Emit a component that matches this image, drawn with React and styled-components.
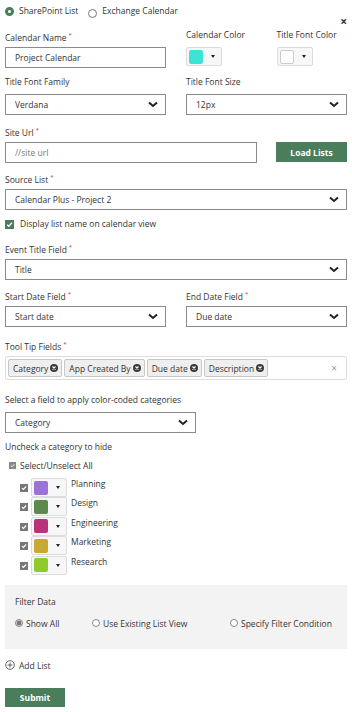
import React from 'react'
import styled, { createGlobalStyle } from 'styled-components'

const GREEN = '#4a7d5c'

const Global = createGlobalStyle`
  body {
    margin: 0;
    background: #fff;
    font-family: "Open Sans", "Noto Sans", sans-serif;
    font-size: 8.5px;
    line-height: 13px;
    color: #333;
  }
`

const Page = styled.div`
  position: relative;
  padding: 3px 5px 4px 5px;
  width: 342px;
`

const CloseX = styled.div`
  position: absolute;
  right: 5px;
  top: 15px;
  font-size: 12px;
  font-weight: bold;
  color: #333;
`

const SourceRow = styled.div`
  display: flex;
  gap: 10px;
  align-items: center;
  height: 15px;
`

const TopRadio = styled.label`
  display: flex;
  align-items: center;
  gap: 5px;
  span.dot {
    width: 9px;
    height: 9px;
    border-radius: 50%;
    box-sizing: border-box;
    border: ${p => (p.$on ? `3px solid ${GREEN}` : '1px solid #777')};
    background: #fff;
    margin-top: ${p => (p.$on ? '2px' : '6px')};
  }
`

const Grid = styled.div`
  display: grid;
  grid-template-columns: ${p => p.$cols || '1fr 1fr'};
  column-gap: ${p => p.$gap || '20px'};
  margin-top: ${p => p.$mt || '0'};
`

const Field = styled.div`
  display: flex;
  flex-direction: column;
`

const Label = styled.div`
  height: 14px;
  line-height: 14px;
  margin-bottom: 5px;
  white-space: nowrap;
  sup {
    color: #c33;
    font-size: 6px;
    margin-left: 2px;
  }
`

const Input = styled.div`
  box-sizing: border-box;
  height: 21px;
  border: 1px solid #8a8a8a;
  display: flex;
  align-items: center;
  padding: 0 9px;
  color: ${p => (p.$placeholder ? '#777' : '#333')};
`

const SelectBox = styled(Input)`
  justify-content: space-between;
  padding-right: 7px;
  width: ${p => p.$w || 'auto'};
`

const Chevron = () => (
  <svg width="10" height="7" viewBox="0 0 10 7">
    <polyline points="1,1.5 5,5 9,1.5" fill="none" stroke="#222" strokeWidth="2" />
  </svg>
)

const Select = ({ value, w }) => (
  <SelectBox $w={w}>
    <span>{value}</span>
    <Chevron />
  </SelectBox>
)

const Picker = styled.div`
  box-sizing: border-box;
  width: 36px;
  height: 19px;
  border: 1px solid #dcdcdc;
  border-radius: 2px;
  background: #f7f7f7;
  display: flex;
  align-items: center;
  padding: 0 4px 0 2px;
  gap: 8px;
  flex-shrink: 0;
  i {
    width: 14px;
    height: 14px;
    border-radius: 2px;
    box-sizing: border-box;
    background: ${p => p.$color};
    border: ${p => (p.$color === '#fff' ? '1px solid #ccc' : 'none')};
  }
  b {
    width: 0;
    height: 0;
    border-left: 2.5px solid transparent;
    border-right: 2.5px solid transparent;
    border-top: 3px solid #222;
  }
`

const ColorPicker = ({ color }) => (
  <Picker $color={color}>
    <i />
    <b />
  </Picker>
)

const Row = styled.div`
  margin-top: ${p => p.$mt || '0'};
`

const GreenButton = styled.div`
  background: ${GREEN};
  color: #fff;
  font-weight: bold;
  height: ${p => p.$h || '19px'};
  display: flex;
  align-items: center;
  justify-content: center;
  width: ${p => p.$w || 'auto'};
`

const CheckRow = styled.div`
  display: flex;
  align-items: center;
  gap: ${p => p.$gap || '6px'};
  margin-top: ${p => p.$mt || '0'};
  padding-left: ${p => p.$indent || '0'};
  .text {
    margin-top: ${p => p.$lift || '0'};
  }
`

const Box = styled.span`
  width: ${p => p.$size || 8}px;
  height: ${p => p.$size || 8}px;
  background: ${p => p.$bg || '#777'};
  display: inline-flex;
  align-items: center;
  justify-content: center;
  flex-shrink: 0;
`

const Check = ({ size = 8, bg }) => (
  <Box $size={size} $bg={bg}>
    <svg width={size - 2} height={size - 2} viewBox="0 0 8 8">
      <polyline points="1.3,4.2 3.2,6 6.8,2" fill="none" stroke="#fff" strokeWidth="1.5" />
    </svg>
  </Box>
)

const TagBox = styled.div`
  box-sizing: border-box;
  height: 24px;
  border: 1px solid #ddd;
  border-radius: 2px;
  display: flex;
  align-items: center;
  padding: 0 2px;
  gap: 2px;
  .clear {
    margin-left: auto;
    margin-right: 7px;
    color: #999;
    font-size: 10px;
  }
`

const Tag = styled.span`
  box-sizing: border-box;
  height: 18px;
  border: 1px solid #c8c8c8;
  border-radius: 2px;
  background: #efefef;
  display: inline-flex;
  align-items: center;
  gap: 2px;
  padding: 0 3px 0 4px;
`

const XCircle = () => (
  <svg width="8" height="8" viewBox="0 0 8 8">
    <circle cx="4" cy="4" r="4" fill="#3a3a3a" />
    <path d="M2.5 2.5 L5.5 5.5 M5.5 2.5 L2.5 5.5" stroke="#fff" strokeWidth="1.2" />
  </svg>
)

const CatList = styled.div`
  margin-top: 6px;
`

const CatRow = styled.div`
  display: flex;
  align-items: flex-start;
  height: 19.4px;
  padding-left: 15px;
  gap: 3px;
  > span:first-child {
    margin-top: 6px;
  }
  .name {
    margin-left: 1px;
    margin-top: -1px;
  }
`

const FilterPanel = styled.div`
  background: #f3f3f3;
  margin-top: 10px;
  height: 64px;
  box-sizing: border-box;
  padding: 10px 10px;
`

const FilterOptions = styled.div`
  display: grid;
  grid-template-columns: 77px 138px 1fr;
  margin-top: 9px;
`

const SmallRadio = styled.label`
  display: flex;
  align-items: center;
  gap: 3px;
  &::before {
    content: '';
    width: 8px;
    height: 8px;
    box-sizing: border-box;
    border-radius: 50%;
    border: 1px solid #888;
    background: ${p => (p.$on ? 'radial-gradient(circle, #777 0 2px, #ccc 2.5px)' : '#fff')};
  }
`

const AddList = styled.div`
  display: flex;
  align-items: center;
  gap: 4px;
  margin-top: 10px;
`

const Req = () => <sup>*</sup>

const categories = [
  ['Planning', '#9b72d6'],
  ['Design', '#5a8a4e'],
  ['Engineering', '#b8337a'],
  ['Marketing', '#c9a836'],
  ['Research', '#8dcc2c'],
]

export default function App() {
  return (
    <>
      <Global />
      <Page>
        <CloseX>×</CloseX>
        <SourceRow>
          <TopRadio $on><span className="dot" />SharePoint List</TopRadio>
          <TopRadio><span className="dot" />Exchange Calendar</TopRadio>
        </SourceRow>

        <Grid $mt="10px">
          <Field>
            <Label>Calendar Name<Req /></Label>
            <Input>Project Calendar</Input>
          </Field>
          <Grid>
            <Field>
              <Label>Calendar Color</Label>
              <ColorPicker color="#3de3d4" />
            </Field>
            <Field>
              <Label>Title Font Color</Label>
              <ColorPicker color="#fff" />
            </Field>
          </Grid>
        </Grid>

        <Grid $mt="7px">
          <Field>
            <Label>Title Font Family</Label>
            <Select value="Verdana" />
          </Field>
          <Field>
            <Label>Title Font Size</Label>
            <Select value="12px" />
          </Field>
        </Grid>

        <Row $mt="8px">
          <Label>Site Url<Req /></Label>
          <Grid $cols="252px 1fr" $gap="19px">
            <Input $placeholder>//site url</Input>
            <GreenButton $h="20px">Load Lists</GreenButton>
          </Grid>
        </Row>

        <Row $mt="7px">
          <Label>Source List<Req /></Label>
          <Select value="Calendar Plus - Project 2" />
        </Row>

        <CheckRow $mt="9.5px" $lift="-3px">
          <Check size={9} bg={GREEN} />
          <span className="text">Display list name on calendar view</span>
        </CheckRow>

        <Row $mt="10.5px">
          <Label>Event Title Field<Req /></Label>
          <Select value="Title" />
        </Row>

        <Grid $mt="7px">
          <Field>
            <Label>Start Date Field<Req /></Label>
            <Select value="Start date" />
          </Field>
          <Field>
            <Label>End Date Field<Req /></Label>
            <Select value="Due date" />
          </Field>
        </Grid>

        <Row $mt="10px">
          <Label>Tool Tip Fields<Req /></Label>
          <TagBox>
            {['Category', 'App Created By', 'Due date', 'Description'].map(t => (
              <Tag key={t}>{t}<XCircle /></Tag>
            ))}
            <span className="clear">×</span>
          </TagBox>
        </Row>

        <Row $mt="13px">
          <Label>Select a field to apply color-coded categories</Label>
          <Select value="Category" w="191px" />
        </Row>

        <Row $mt="7px">
          <Label>Uncheck a category to hide</Label>
          <CheckRow $indent="4px" $gap="4px">
            <Check size={7} bg="#888" />
            <span className="text">Select/Unselect All</span>
          </CheckRow>
          <CatList>
            {categories.map(([name, color]) => (
              <CatRow key={name}>
                <Check size={8} bg="#777" />
                <ColorPicker color={color} />
                <span className="name">{name}</span>
              </CatRow>
            ))}
          </CatList>
        </Row>

        <FilterPanel>
          <div>Filter Data</div>
          <FilterOptions>
            <SmallRadio $on>Show All</SmallRadio>
            <SmallRadio>Use Existing List View</SmallRadio>
            <SmallRadio>Specify Filter Condition</SmallRadio>
          </FilterOptions>
        </FilterPanel>

        <AddList>
          <svg width="10" height="10" viewBox="0 0 10 10">
            <circle cx="5" cy="5" r="4.3" fill="none" stroke="#555" strokeWidth="0.9" />
            <path d="M5 2.6 V7.4 M2.6 5 H7.4" stroke="#555" strokeWidth="0.9" />
          </svg>
          Add List
        </AddList>

        <Row $mt="16.5px">
          <GreenButton $w="60px">Submit</GreenButton>
        </Row>
      </Page>
    </>
  )
}
